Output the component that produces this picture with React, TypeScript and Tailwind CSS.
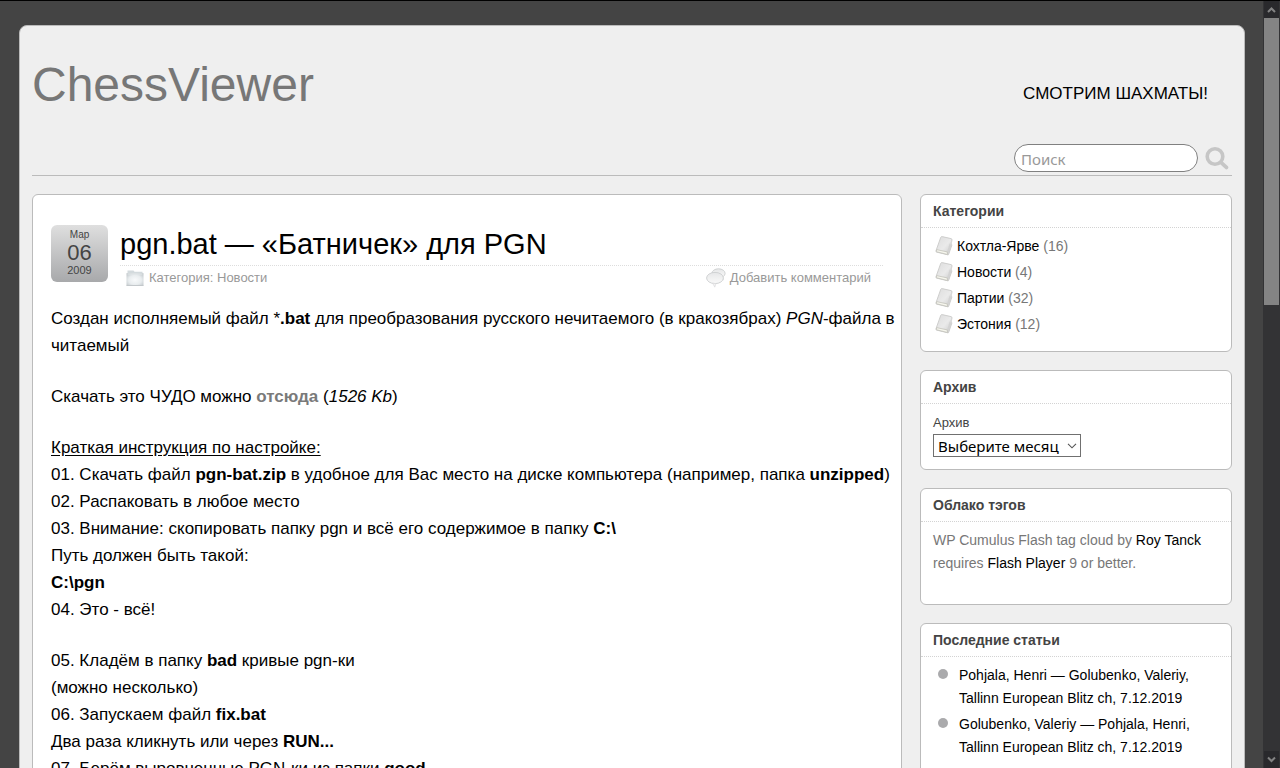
import type { ReactNode } from 'react';

const categories = [
  { name: 'Кохтла-Ярве', count: 16 },
  { name: 'Новости', count: 4 },
  { name: 'Партии', count: 32 },
  { name: 'Эстония', count: 12 },
];

const recentPosts = [
  'Pohjala, Henri — Golubenko, Valeriy, Tallinn European Blitz ch, 7.12.2019',
  'Golubenko, Valeriy — Pohjala, Henri, Tallinn European Blitz ch, 7.12.2019',
];

function SearchIcon() {
  return (
    <svg width="24" height="24" viewBox="0 0 24 24" fill="none" aria-hidden="true">
      <circle cx="10" cy="10.5" r="7.8" stroke="#c6c6c6" strokeWidth="3.6" />
      <path d="M16.2 16.7L21.4 21.4" stroke="#c6c6c6" strokeWidth="3.8" strokeLinecap="round" />
    </svg>
  );
}

function FolderIcon() {
  return (
    <svg width="18" height="18" viewBox="0 0 18 18" aria-hidden="true">
      <defs>
        <radialGradient id="folder" cx="0.5" cy="0.55" r="0.75">
          <stop offset="0" stopColor="#f8fafb" />
          <stop offset="0.5" stopColor="#e9edef" />
          <stop offset="1" stopColor="#b5bcc0" />
        </radialGradient>
      </defs>
      <path d="M1.5 1.5h6l1 1.2h8v3h-15z" fill="#d3dadd" />
      <path d="M.5 4.2h17v12.3H.5z" fill="url(#folder)" />
      <path d="M1.5 5h15" stroke="#e4e9eb" />
      <path d="M.5 16.5h17" stroke="#c3c8cb" />
    </svg>
  );
}

function CommentsIcon() {
  return (
    <svg width="20" height="20" viewBox="0 0 20 20" aria-hidden="true">
      <defs>
        <linearGradient id="bubble" x1="0" y1="0" x2="0" y2="1">
          <stop offset="0" stopColor="#e6e7e8" />
          <stop offset="1" stopColor="#fafafa" />
        </linearGradient>
      </defs>
      <ellipse cx="12.5" cy="5.4" rx="6.6" ry="4.6" fill="url(#bubble)" stroke="#cdcfd0" strokeWidth="0.9" />
      <path d="M17 9l1 3.4-3.5-1.8z" fill="#e4e5e6" />
      <ellipse cx="9" cy="10" rx="8.4" ry="5.6" fill="url(#bubble)" stroke="#cccecf" strokeWidth="0.9" />
      <path d="M6.6 15.2l2.2 4 1.2-3.7z" fill="#f3f3f3" stroke="#d8d9da" strokeWidth="0.6" />
    </svg>
  );
}

function BookIcon() {
  return (
    <svg width="18" height="20" viewBox="0 0 18 20" className="shrink-0" aria-hidden="true">
      <defs>
        <linearGradient id="book" x1="0" y1="0" x2="1" y2="1">
          <stop offset="0" stopColor="#dcdcdc" />
          <stop offset="0.55" stopColor="#eaeaea" />
          <stop offset="1" stopColor="#c9c9c9" />
        </linearGradient>
      </defs>
      <path
        d="M5.8 1.2Q6.2.4 7.2.6l8.8 2q1.2.3 1 1.4-.2 1.6-1 3 .6 1.6.9 2l-3.2 9.2q-.3.8-1 .6L1.6 16.1Q.8 15.8.9 15z"
        fill="url(#book)"
        stroke="#c9c9c8"
        strokeWidth="0.9"
        strokeLinejoin="round"
      />
      <path d="M14.6 7.6l2 1.4-3.1 8.9-1 .6-.4-2.8z" fill="#d3d3d3" />
      <path d="M1.6 13.6l10.6 2.3.4 2.6-11.2-2.8z" fill="#f6f6ee" stroke="#bdbdb4" strokeWidth="0.7" />
    </svg>
  );
}

function Chevron({ up = false }: { up?: boolean }) {
  return (
    <svg width="15" height="17" viewBox="0 0 15 17" fill="none" stroke="#838383" strokeWidth="2" aria-hidden="true">
      <path d={up ? 'M4 11l3.5-3.5L11 11' : 'M4 6.5L7.500 10 11 6.500'} />
    </svg>
  );
}

function Widget({ title, children }: { title: string; children: ReactNode }) {
  return (
    <section className="rounded-md border border-[#bbbbbb] bg-white">
      <h3 className="border-b border-dotted border-[#d3d3d3] px-3 text-sm leading-8 font-bold text-[#444444]">{title}</h3>
      {children}
    </section>
  );
}

function Article() {
  return (
    <main className="min-w-0 flex-1 rounded-md border border-[#bbbbbb] bg-white pt-[30px] pr-[6px] pl-[18px]">
      <header className="flex gap-3 pr-3">
        <time
          dateTime="2009-03-06"
          className="flex h-[57px] w-[57px] shrink-0 flex-col items-center rounded-md bg-linear-to-b from-[#dfdfdf] to-[#a8a9ab] pt-1 text-[#444444]"
        >
          <span className="text-[10px] leading-3">Мар</span>
          <span className="text-[22px] leading-6">06</span>
          <span className="text-[11px] leading-[11px]">2009</span>
        </time>
        <div className="min-w-0 flex-1">
          <h2 className="border-b border-dotted border-[#dddddd] pb-[2px] text-[29px] leading-[38px] text-black">
            <a href="#post">pgn.bat — «Батничек» для PGN</a>
          </h2>
          <div className="flex h-6 items-center justify-between pr-3 pl-[6px] text-[13px] text-[#999999]">
            <p className="flex items-center gap-[5px]">
              <FolderIcon />
              <span>Категория: <a href="#news">Новости</a></span>
            </p>
            <a href="#comments" className="flex items-center gap-1">
              <CommentsIcon />
              Добавить комментарий
            </a>
          </div>
        </div>
      </header>
      <div className="mt-[15px] flex flex-col gap-6 text-[17px] leading-[27px] text-black">
        <p>
          Создан исполняемый файл *<b>.bat</b> для преобразования русского нечитаемого (в кракозябрах) <i>PGN</i>-файла в читаемый
        </p>
        <p>
          Скачать это ЧУДО можно <a href="#download" className="font-bold text-[#7a7a7a]">отсюда</a> (<i>1526 Kb</i>)
        </p>
        <p>
          <u className="underline-offset-2">Краткая инструкция по настройке:</u>
          <br />
          01. Скачать файл <b>pgn-bat.zip</b> в удобное для Вас место на диске компьютера (например, папка <b>unzipped</b>)
          <br />
          02. Распаковать в любое место
          <br />
          03. Внимание: скопировать папку pgn и всё его содержимое в папку <b>C:\</b>
          <br />
          Путь должен быть такой:
          <br />
          <b>C:\pgn</b>
          <br />
          04. Это - всё!
        </p>
        <p>
          05. Кладём в папку <b>bad</b> кривые pgn-ки
          <br />
          (можно несколько)
          <br />
          06. Запускаем файл <b>fix.bat</b>
          <br />
          Два раза кликнуть или через <b>RUN...</b>
          <br />
          07. Берём выровненные PGN-ки из папки <b>good</b>
        </p>
      </div>
    </main>
  );
}

function Sidebar() {
  return (
    <aside className="flex w-[312px] shrink-0 flex-col gap-[18px] text-sm">
      <Widget title="Категории">
        <ul className="px-3 pt-[5px] pb-[14px]">
          {categories.map((c) => (
            <li key={c.name} className="flex h-[26px] items-center gap-1 pl-[2px] text-[#777777]">
              <BookIcon />
              <span>
                <a href="#category" className="text-black">{c.name}</a> ({c.count})
              </span>
            </li>
          ))}
        </ul>
      </Widget>
      <Widget title="Архив">
        <div className="flex flex-col items-start px-3 pt-[9px] pb-3">
          <label htmlFor="archive" className="text-[13px] leading-5 text-[#444444]">Архив</label>
          <div className="relative mt-px">
            <select
              id="archive"
              className="block h-[23px] w-[148px] appearance-none border border-[#707070] bg-white pl-1 font-['Noto_Sans',sans-serif] text-[15px] leading-5 text-black"
            >
              <option>Выберите месяц</option>
            </select>
            <svg width="10" height="6" viewBox="0 0 10 6" fill="none" stroke="#555555" strokeWidth="1.1" className="pointer-events-none absolute top-[9px] right-1" aria-hidden="true">
              <path d="M1 .8l4 4 4-4" />
            </svg>
          </div>
        </div>
      </Widget>
      <Widget title="Облако тэгов">
        <p className="px-3 pt-[7px] pb-[29px] leading-[23px] text-[#777777]">
          WP Cumulus Flash tag cloud by <a href="#author" className="text-black">Roy Tanck</a> requires{' '}
          <a href="#player" className="text-black">Flash Player</a> 9 or better.
        </p>
      </Widget>
      <Widget title="Последние статьи">
        <ul className="flex flex-col gap-[3px] px-3 pt-[7px] pb-6">
          {recentPosts.map((post) => (
            <li key={post} className="flex gap-[11px] pr-5 pl-1 leading-[23px]">
              <span className="mt-[5px] ml-px h-[10px] w-[10px] shrink-0 rounded-full bg-[#aaaaac]" />
              <a href="#recent" className="text-black">{post}</a>
            </li>
          ))}
        </ul>
      </Widget>
    </aside>
  );
}

export default function App() {
  return (
    <div className="flex h-screen overflow-hidden border-t border-black bg-[#444444] font-['Liberation_Sans',Arial,sans-serif]">
      <div className="min-w-0 flex-1 pt-6 pr-[18px] pl-[19px]">
        <div className="rounded-lg border border-[#bbbbbb] bg-[#efefef] px-3 pb-12">
          <header className="border-b border-[#bbbbbb] pt-[31px]">
            <div className="flex items-center justify-between pr-6">
              <h1 className="text-5xl leading-[56px] text-[#777777]">
                <a href="#home">ChessViewer</a>
              </h1>
              <p className="pt-[18px] text-[17px] leading-6 text-black">СМОТРИМ ШАХМАТЫ!</p>
            </div>
            <form className="flex items-center justify-end gap-[7px] pt-[31px] pr-[3px] pb-[3px]" onSubmit={(e) => e.preventDefault()}>
              <input
                type="text"
                aria-label="Поиск"
                placeholder="Поиск"
                className="h-7 w-[184px] rounded-[14px] border border-[#808080] bg-white px-[6px] pt-[2px] font-['Noto_Sans',sans-serif] text-[15px] text-black outline-none placeholder:text-[#999999]"
              />
              <button type="submit" aria-label="Найти">
                <SearchIcon />
              </button>
            </form>
          </header>
          <div className="flex gap-[18px] pt-[18px]">
            <Article />
            <Sidebar />
          </div>
        </div>
      </div>
      <div className="flex w-[17px] shrink-0 flex-col border-x border-[#333335] bg-[#333335]" aria-hidden="true">
        <div className="flex h-[17px] justify-center bg-[#29292c]">
          <Chevron up />
        </div>
        <div className="h-[287px] bg-[#848484]" />
        <div className="mt-auto flex h-[17px] justify-center bg-[#29292c]">
          <Chevron />
        </div>
      </div>
    </div>
  );
}
